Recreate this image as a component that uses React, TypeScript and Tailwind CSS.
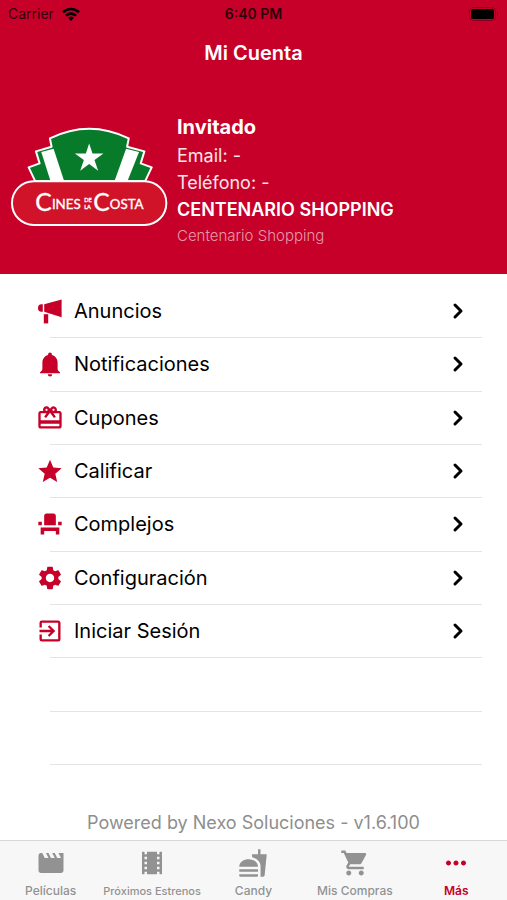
import type { ReactNode } from "react";
import {
  MdEventSeat,
  MdExitToApp,
  MdFastfood,
  MdMoreHoriz,
  MdMovie,
  MdRedeem,
  MdSettings,
  MdShoppingCart,
  MdStar,
  MdTheaters,
} from "react-icons/md";
import { ChevronRight } from "lucide-react";

const MegaphoneIcon = () => (
  <svg viewBox="0 0 24 25" className="h-[25px] w-[24px]" fill="currentColor">
    <path d="M4.8 5.2v7.6H3.4a3.4 3.8 0 0 1 0-7.6z" />
    <path d="M6.2 5.2 23.6 0.4v17.8L6.2 12.8z" />
    <path d="M5.8 15.2h4.4v9.2H5.8z" />
  </svg>
);

const BellIcon = () => (
  <svg viewBox="0 0 24 25" className="h-[25px] w-[24px]" fill="currentColor">
    <path d="M12 .5a1.900 1.900 0 0 0-1.900 1.900v.5C6.400 3.900 4.400 7 4.400 10.600v6.200c0 1.400-1 2.600-2.400 3.400v1h20v-1c-1.400-.8-2.400-2-2.400-3.400v-6.200c0-3.600-2-6.700-5.700-7.700v-.5A1.900 1.900 0 0 0 12 .5z" />
    <path d="M9.800 22.200h4.400a2.200 2.200 0 0 1-4.400 0z" />
  </svg>
);

const Logo = () => (
  <svg viewBox="30 50 475 300" className="mt-[15px] h-[100px] w-[158px] shrink-0" role="img" aria-label="Cines de la Costa">
    <path
      d="M106 213 86 171 119 159 108 123 155 109 150 84Q268 26 387 84L382 109 434 123 423 159 456 171 436 213z"
      fill="#087b2b"
      stroke="#fff"
      strokeWidth="6"
      strokeLinejoin="round"
    />
    <path d="M124 125 161 115 193 213H152z" fill="#fff" />
    <path d="M379 115 418 125 383 213H344z" fill="#fff" />
    <path d="M268 99 278 129H311L284 149 295 181 268 161 241 181 252 149 225 129H258z" fill="#fff" />
    <rect x="36" y="213" width="464" height="131" rx="65" fill="#d1132a" stroke="#fff" strokeWidth="6" />
    <g fill="#fff" stroke="#fff" strokeWidth="1" fontFamily="Lato, sans-serif">
      <text x="106" y="302" fontSize="74">C</text>
      <text x="156" y="296" fontSize="40">INES</text>
      <text x="253" y="274" fontSize="17">DE</text>
      <text x="253" y="296" fontSize="17">LA</text>
      <text x="280" y="302" fontSize="74">C</text>
      <text x="330" y="296" fontSize="40">OSTA</text>
    </g>
  </svg>
);

const menu: { label: string; icon: ReactNode }[] = [
  { label: "Anuncios", icon: <MegaphoneIcon /> },
  { label: "Notificaciones", icon: <BellIcon /> },
  { label: "Cupones", icon: <MdRedeem size={30} /> },
  { label: "Calificar", icon: <MdStar size={29} /> },
  { label: "Complejos", icon: <MdEventSeat size={30} /> },
  { label: "Configuración", icon: <MdSettings size={30} /> },
  { label: "Iniciar Sesión", icon: <MdExitToApp size={30} /> },
];

const tabs = [
  { label: "Películas", icon: <MdMovie size={30} /> },
  { label: "Próximos Estrenos", icon: <MdTheaters size={30} />, small: true },
  { label: "Candy", icon: <MdFastfood size={30} /> },
  { label: "Mis Compras", icon: <MdShoppingCart size={30} /> },
  { label: "Más", icon: <MdMoreHoriz size={30} />, active: true },
];

const App = () => {
  return (
    <div className="flex min-h-screen flex-col bg-white font-['Inter',sans-serif] text-black">
      <header className="bg-[#c60029]">
        {/* Status bar */}
        <div className="grid h-7 grid-cols-3 items-center px-2 text-sm">
          <div className="flex items-center gap-2 text-black/75">
            <span>Carrier</span>
            <svg viewBox="0 0 18 14" className="h-[14px] w-[18px] text-black" fill="none" stroke="currentColor" strokeWidth="2.6">
              <path d="M1 5.2a11.5 11.5 0 0 1 16 0" />
              <path d="M4 8.6a7.2 7.2 0 0 1 10 0" />
              <path d="M9 14 6 10.8a4.4 4.4 0 0 1 6 0z" fill="currentColor" stroke="none" />
            </svg>
          </div>
          <span className="text-center font-semibold text-black/80">6:40 PM</span>
          <svg viewBox="0 0 30 14" className="h-[14px] w-[30px] justify-self-end">
            <rect x="0.5" y="0.5" width="26" height="13" rx="4" fill="none" stroke="#000" strokeOpacity="0.3" />
            <rect x="2" y="2" width="23" height="10" rx="2.5" fill="#000" />
            <path d="M28 4.5q2 2.5 0 5z" fill="#000" fillOpacity="0.35" />
          </svg>
        </div>
        <h1 className="flex h-[50px] items-center justify-center text-xl font-semibold text-white">Mi Cuenta</h1>

        {/* Profile */}
        <section className="flex items-start gap-[9px] px-[10px] pt-[34px] pb-[26px] text-white">
          <Logo />
          <div>
            <h2 className="text-xl leading-[30px] font-bold">Invitado</h2>
            <p className="text-lg leading-[27px] text-white/90">Email: -</p>
            <p className="text-lg leading-[27px] text-white/90">Teléfono: -</p>
            <p className="text-lg leading-[27px] font-semibold">CENTENARIO SHOPPING</p>
            <p className="text-[15px] leading-[25px] font-light text-white/60">Centenario Shopping</p>
          </div>
        </section>
      </header>

      <main className="flex flex-1 flex-col pt-[11px]">
        <ul className="grid min-h-[480px] auto-rows-fr pr-[25px] pl-[36px]">
          {menu.map((item) => (
            <li key={item.label} className="flex flex-col">
              <button type="button" className="flex flex-1 items-stretch text-left text-xl">
                <span className="flex w-7 items-center justify-center text-[#c60029]">{item.icon}</span>
                <span className="flex flex-1 items-center justify-between pr-3 pl-[10px]">
                  {item.label}
                  <ChevronRight size={24} strokeWidth={3} />
                </span>
              </button>
              <hr className="ml-[14px] border-[#e4e4e4]" />
            </li>
          ))}
          {/* Empty rows */}
          <li className="ml-[14px] border-b border-[#e4e4e4]" />
          <li className="ml-[14px] border-b border-[#e4e4e4]" />
        </ul>
        <p className="mt-auto pt-10 pb-[3px] text-center text-lg leading-[28px] text-[#8e8e8e]">
          Powered by Nexo Soluciones - v1.6.100
        </p>
      </main>

      <nav className="grid h-[60px] grid-cols-5 border-t border-[#d8d8d8] bg-[#f7f7f7] font-medium text-[#929292]">
        {tabs.map((tab) => (
          <button
            key={tab.label}
            type="button"
            className={`flex flex-col items-center justify-between pt-[7px] whitespace-nowrap ${tab.small ? "text-[11px]" : "text-xs"} ${tab.active ? "font-semibold text-[#c60029]" : ""}`}
          >
            {tab.icon}
            <span className="leading-[18px]">{tab.label}</span>
          </button>
        ))}
      </nav>
    </div>
  );
};

export default App;
